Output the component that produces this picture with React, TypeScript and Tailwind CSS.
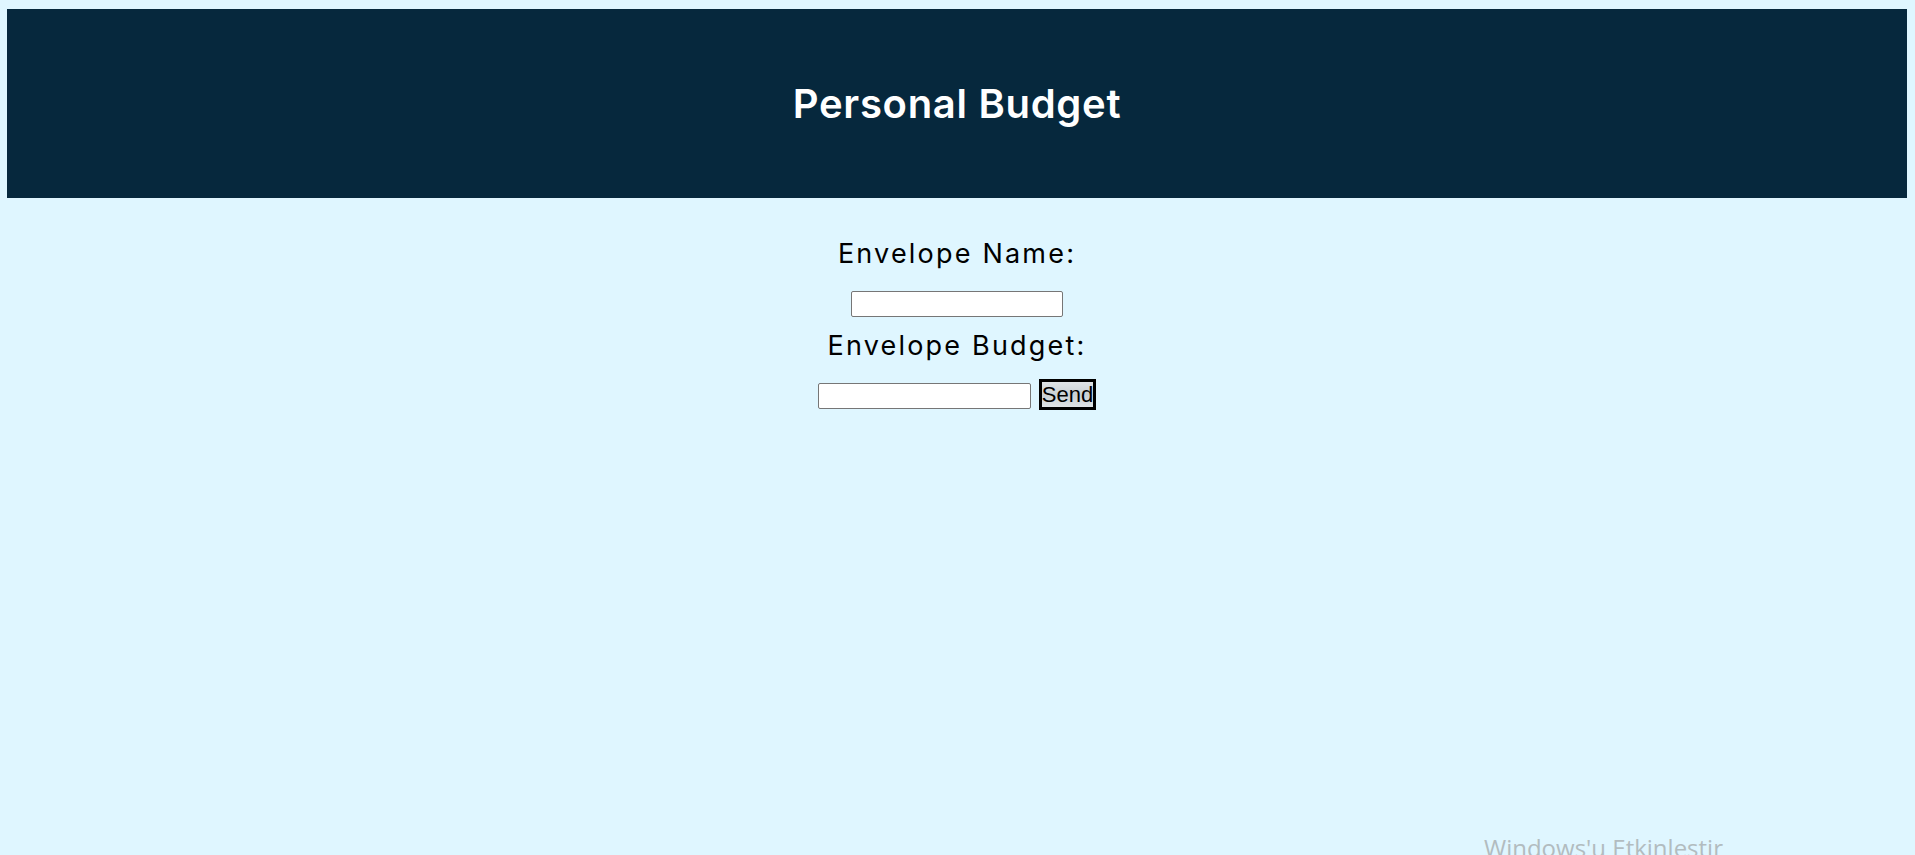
import React from 'react';

const App: React.FC = () => {
  return (
    <div className="min-h-screen bg-[#DFF6FF] pt-[9px] pl-[7px] pr-[8px] relative overflow-hidden" style={{ height: 855 }}>
      <header className="h-[189px] bg-[#06283D] flex items-center justify-center">
        <h1 className="text-white text-[40px] font-semibold tracking-[0.7px] font-['Inter',sans-serif]">Personal Budget</h1>
      </header>
      <form className="flex flex-col items-center font-['Inter',sans-serif] text-black" onSubmit={(e) => e.preventDefault()}>
        <label htmlFor="name" className="mt-[40px] text-[27px] leading-[32px] tracking-[2.2px]">Envelope Name:</label>
        <input id="name" type="text" className="mt-[21px] w-[212px] h-[26px] border border-[#767676] bg-white rounded-[2px]" />
        <label htmlFor="budget" className="mt-[13px] text-[27px] leading-[32px] tracking-[2.2px]">Envelope Budget:</label>
        <div className="mt-[17px] flex items-center gap-[8px]">
          <input id="budget" type="text" className="w-[213px] h-[26px] mt-[3px] border border-[#767676] bg-white rounded-[2px]" />
          <button type="submit" className="w-[57px] h-[31px] border-[3px] border-black bg-gradient-to-b from-[#dfe3e6] via-[#c9d0d4] to-[#dfe3e6] text-[22px] leading-none font-['Liberation_Sans',Arial,sans-serif] text-black flex items-center justify-center">Send</button>
        </div>
      </form>
      <div className="absolute left-[1484px] top-[836px] text-[24px] text-[#b2bcc0] font-['Open_Sans',sans-serif] leading-none whitespace-nowrap">Windows'u Etkinleştir</div>
    </div>
  );
};

export default App;
